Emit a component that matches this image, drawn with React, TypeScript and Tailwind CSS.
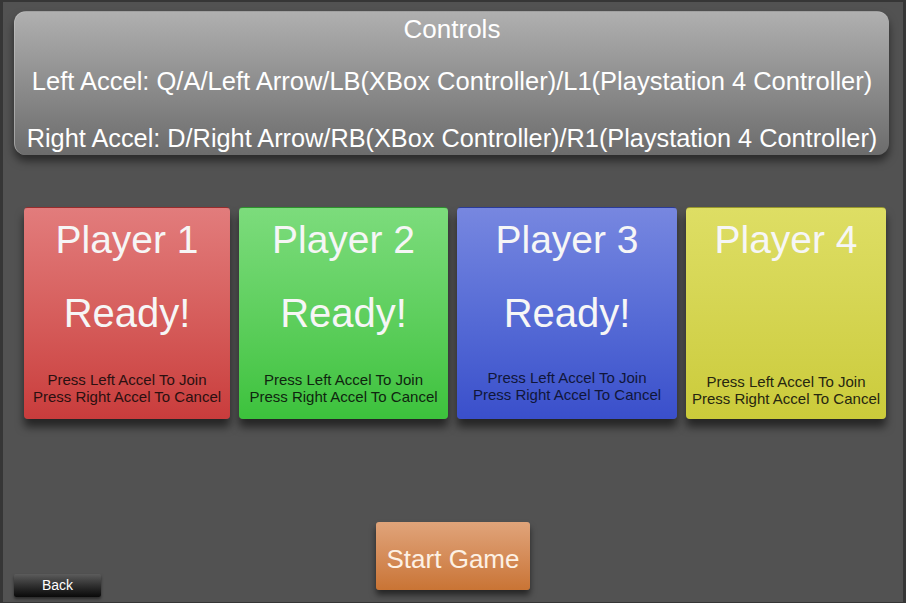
import React from 'react';

type Slot = {
  name: string;
  ready: boolean;
  bg: string;
  width: string;
  hint: string;
  pad: string;
};

const slots: Slot[] = [
  { name: 'Player 1', ready: true, width: 'w-[206px]', bg: 'bg-gradient-to-b from-[#e27c7c] to-[#c93c3c]', hint: 'text-[#2a1010]', pad: 'pb-[14px]' },
  { name: 'Player 2', ready: true, width: 'w-[209px]', bg: 'bg-gradient-to-b from-[#7cdc7c] to-[#3cc23c]', hint: 'text-[#0f250f]', pad: 'pb-[14px]' },
  { name: 'Player 3', ready: true, width: 'w-[220px]', bg: 'bg-gradient-to-b from-[#7787e0] to-[#3a4fcb]', hint: 'text-[#10163a]', pad: 'pb-[16px]' },
  { name: 'Player 4', ready: false, width: 'w-[200px]', bg: 'bg-gradient-to-b from-[#dede64] to-[#cbcb3a]', hint: 'text-[#262610]', pad: 'pb-[12px]' },
];

const PlayerCard = ({ slot }: { slot: Slot }) => (
  <div
    className={`${slot.width} ${slot.bg} ${slot.pad} h-[212px] rounded-[4px] border-t border-black/25 flex flex-col items-center shadow-[0_8px_8px_rgba(0,0,0,0.55)]`}
  >
    <div className="mt-[10px] text-[39px] leading-[44px] text-[#f6f6f6]">{slot.name}</div>
    <div className={`mt-[29px] text-[40px] leading-[44px] text-[#f6f6f6] ${slot.ready ? '' : 'invisible'}`}>Ready!</div>
    <div className={`mt-auto text-[15px] leading-[17px] text-center ${slot.hint}`}>
      <div>Press Left Accel To Join</div>
      <div>Press Right Accel To Cancel</div>
    </div>
  </div>
);

export default function App() {
  return (
    <div
      className="w-[906px] h-[603px] bg-[#525252] border-t-2 border-l-[3px] border-r-[3px] border-b border-[#363636] flex flex-col"
      style={{ fontFamily: '"Liberation Sans", Arial, sans-serif' }}
    >
      {/* controls help panel */}
      <div className="mt-[9px] ml-[11px] mr-[14px] h-[144px] rounded-[12px] bg-gradient-to-b from-[#b0b0b0] to-[#6c6c6c] border-t border-l border-[#c4c4c4]/60 shadow-[0_6px_8px_rgba(0,0,0,0.5)] flex flex-col items-center text-white">
        <div className="mt-[2px] text-[26px] leading-[30px]">Controls</div>
        <div className="mt-[22px] text-[25.5px] leading-[30px] whitespace-nowrap">
          Left Accel: Q/A/Left Arrow/LB(XBox Controller)/L1(Playstation 4 Controller)
        </div>
        <div className="mt-[27px] text-[25.3px] leading-[30px] whitespace-nowrap">
          Right Accel: D/Right Arrow/RB(XBox Controller)/R1(Playstation 4 Controller)
        </div>
      </div>

      {/* player slots */}
      <div className="mt-[52px] ml-[21px] flex gap-[9px]">
        {slots.map((s) => (
          <PlayerCard key={s.name} slot={s} />
        ))}
      </div>

      <div className="flex-1 grid grid-cols-[1fr_auto_1fr] items-end px-[11px] pb-[5px]">
        <button className="w-[87px] h-[23px] rounded-[2px] bg-gradient-to-b from-[#5c5c5c] to-[#0a0a0a] text-white text-[14px] leading-[23px] shadow-[0_2px_3px_rgba(0,0,0,0.5)] justify-self-start">
          Back
        </button>
        <button className="mb-[7px] w-[154px] h-[68px] pt-[6px] rounded-[3px] bg-gradient-to-b from-[#e0a47a] to-[#c97434] text-[#fdf1e4] text-[26px] shadow-[0_5px_6px_rgba(0,0,0,0.55)]">
          Start Game
        </button>
        <div />
      </div>
    </div>
  );
}
